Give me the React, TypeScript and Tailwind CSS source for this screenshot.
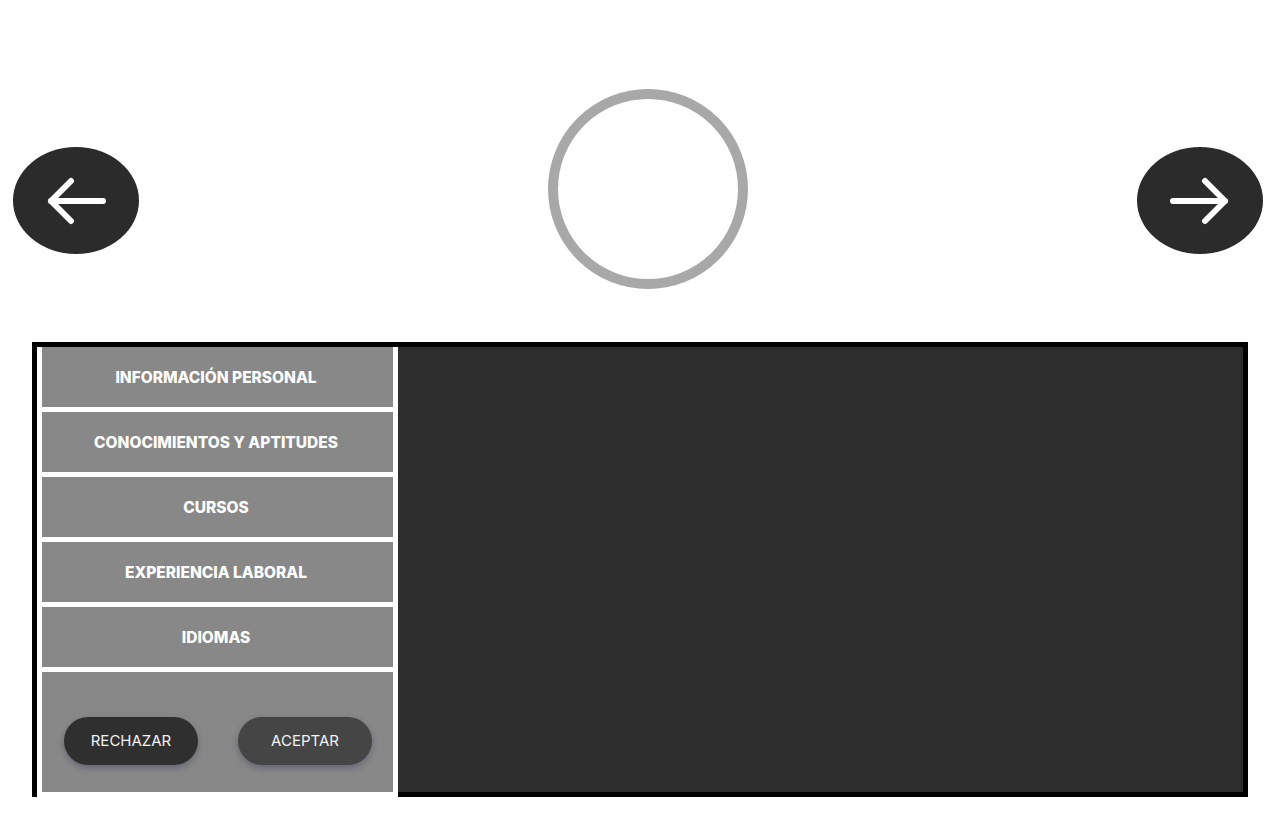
import React from "react";

const items = [
  "INFORMACIÓN PERSONAL",
  "CONOCIMIENTOS Y APTITUDES",
  "CURSOS",
  "EXPERIENCIA LABORAL",
  "IDIOMAS",
];

function Arrow({ dir }: { dir: "left" | "right" }) {
  return (
    <svg width="62" height="48" viewBox="0 0 62 48" fill="none" stroke="#ffffff" strokeWidth="6" strokeLinecap="round" strokeLinejoin="round">
      {dir === "left" ? (
        <g>
          <path d="M6 24 H58" />
          <path d="M26 4 L6 24 L26 44" />
        </g>
      ) : (
        <g>
          <path d="M4 24 H56" />
          <path d="M36 4 L56 24 L36 44" />
        </g>
      )}
    </svg>
  );
}

export default function App() {
  return (
    <div className="w-[1280px] h-[832px] bg-white overflow-hidden" style={{ fontFamily: "Inter, 'Open Sans', sans-serif" }}>
      <div className="flex items-start h-[342px]">
        <button className="mt-[147px] ml-[13px] w-[126px] h-[107px] rounded-[50%] bg-[#2b2b2b] flex items-center justify-center">
          <Arrow dir="left" />
        </button>
        <div className="mt-[89px] ml-[409px] w-[200px] h-[200px] rounded-full border-[10px] border-[#a8a8a8]" />
        <button className="mt-[147px] ml-[389px] w-[126px] h-[107px] rounded-[50%] bg-[#2b2b2b] flex items-center justify-center">
          <Arrow dir="right" />
        </button>
      </div>
      <div className="mx-8 h-[455px] border-[5px] border-black flex items-start">
        <div className="w-[361px] h-[450px] bg-white px-[5px] pb-[5px] flex flex-col gap-[5px]">
          {items.map((t) => (
            <div key={t} className="h-[60px] bg-[#888888] flex items-center justify-center text-white font-extrabold text-[15.5px] pt-[2px] pr-[3px]">
              {t}
            </div>
          ))}
          <div className="flex-1 bg-[#888888] pt-[45px] pl-[22px] flex gap-[40px] items-start">
            <button className="w-[134px] h-[48px] rounded-full bg-[#2f2f2f] text-[#f2f2f2] text-[15px] shadow-[0_3px_6px_rgba(40,40,80,0.35)]">
              RECHAZAR
            </button>
            <button className="w-[134px] h-[48px] rounded-full bg-[#454545] text-[#f2f2f2] text-[15px] shadow-[0_3px_6px_rgba(40,40,80,0.35)]">
              ACEPTAR
            </button>
          </div>
        </div>
        <div className="flex-1 self-stretch bg-[#2d2d2d]" />
      </div>
    </div>
  );
}
